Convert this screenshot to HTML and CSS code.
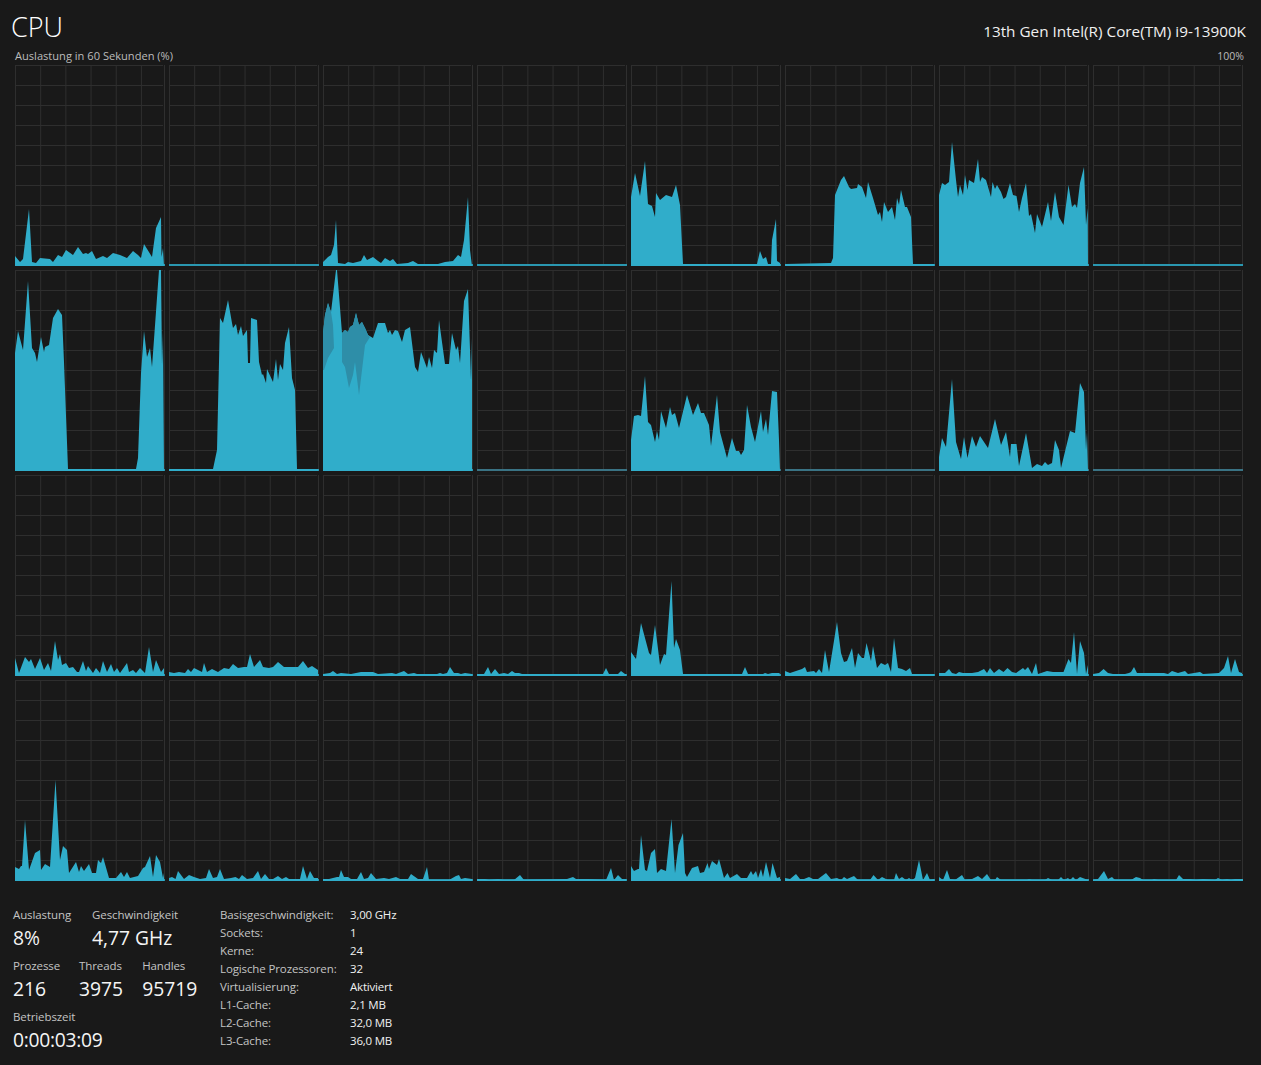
FILE: index.html
```html
<!DOCTYPE html>
<html lang="de">
<head>
<meta charset="utf-8">
<title>CPU</title>
<link rel="stylesheet" href="styles.css">
</head>
<body>
<main class="page">
  <header class="head">
    <h1 class="title">CPU</h1>
    <div class="model">13th Gen Intel(R) Core(TM) i9-13900K</div>
  </header>
  <div class="axis"><span>Auslastung in 60 Sekunden (%)</span><span class="axis-max">100%</span></div>
  <section class="charts">
    <div class="cell"><svg class="plot" viewBox="0 0 150 201"><polygon points="0,191 5,197 8,194 14,144 17,197 21,198 25,193 35,194 38,197 43,190 47,192 51,185 58,190 63,182 68,189 71,188 73,189 77,186 81,194 88,191 92,193 98,188 105,190 112,193 118,186 123,190 126,193 129,179 137,192 141,163 146,152 146.5,192 148,183 149,201 0,201"/></svg></div>
    <div class="cell"></div>
    <div class="cell"><svg class="plot" viewBox="0 0 150 201"><polygon points="0,197 5,192 8,190 11,180 13,155 15,198 22,199 25,197 30,198 38,196 41,190 44,195 50,192 55,196 58,198 62,193 67,196 70,194 74,199 85,198 90,196 95,199 115,199 122,197 130,196 135,190 138,192 141,175 145,132 147,185 149,201 0,201"/></svg></div>
    <div class="cell"></div>
    <div class="cell"><svg class="plot" viewBox="0 0 150 201"><polygon points="0,132 4,108 9,131 14,96 17,139 21,141 24,152 25,128 29,135 35,130 41,132 45,120 49,140 52,199 126,199 129,186 132,194 135,192 137,199 140,199 141,175 145,154 146,196 149,198 149,201 0,201"/></svg></div>
    <div class="cell"><svg class="plot" viewBox="0 0 150 201"><polygon points="0,199 46,198 48,193 50,130 56,115 59,111 64,122 66,124 72,123 73,119 77,122 81,133 83,117 88,133 93,150 95,147 97,157 99,137 103,147 107,142 110,155 112,133 114,140 116,125 120,142 122,142 126,152 128,199 149,199 149,201 0,201"/></svg></div>
    <div class="cell"><svg class="plot" viewBox="0 0 150 201"><polygon points="0,130 3,118 6,120 10,117 13,77 17,115 19,132 21,120 24,130 26,110 28.5,125 30,115 35,118 39,94 41,117 43,112 47,115 52,132 53.5,117 56,124 58,120 62,127 64.5,134 67,132 71,118 74,130 77.5,131 80,147 83,133 87,118 90,151 92,149 96,168 98,149 103,162 109,137 112,156 116,127 120,152 124.5,160 129.5,120 133,142 136,139 138,143 141,118 145,102 147,160 148.7,143 149,201 0,201"/></svg></div>
    <div class="cell"></div>

    <div class="cell"><svg class="plot" viewBox="0 0 150 201"><polygon points="0,83 3,61 8,80 13,11 17,78 20,83 22,92 26,67 29,82 30,77 34,75 38,48 43,39 47,45 49,92 53,199 121,199 123,188 126,103 129,61 132,87 135,78 137,97 144,0 146,0 147,95 148,62 149,201 0,201"/></svg></div>
    <div class="cell"><svg class="plot" viewBox="0 0 150 201"><polygon points="0,199 44,199 48,180 51,48 54,53 59,30 63,53 64,58 67,54 69,65 72,56 74,66 78,60 79,93 81,93 82,48 88,50 90,92 93,105 94,104 97,113 98,99 104,112 107,89 109,110 111,94 114,100 116,73 120,57 123,108 126,120 128,199 149,199 149,201 0,201"/></svg></div>
    <div class="cell"><svg class="plot" viewBox="0 0 150 201"><polygon points="0,63 2,45 5,33 8,42 13,0 14,0 19,63 22,60 25,62 27,57 30,55 33,43 36,55 39,52 42,58 45,65 50,68 55,53 62,53 65,63 67,60 69,65 72,60 75,61 79,72 82,60 87,57 92,97 95,102 98,82 104,98 106,87 109,98 111,80 114,83 116,50 122,94 126,94 129,63 133,80 135,76 137,93 141,31 145,19 148,110 149,68 149,201 0,201"/><polygon class="shade" points="0,63 2,45 5,33 8,42 10,55 11,78 5,88 1,100 0,100"/><polygon class="shade" points="19,63 22,60 25,62 27,57 30,55 33,43 36,55 39,52 42,58 45,65 47,67 42,75 36,125 32,92 30,105 26,118 22,97 19,92"/></svg></div>
    <div class="cell cell-dim"></div>
    <div class="cell cell-dim"><svg class="plot" viewBox="0 0 150 201"><polygon points="0,170 3,146 7,145 10,146 14,106 17,152 20,155 24,172 26,161 28,170 30,141 35,158 39,137 41,145 44,143 48,158 56,125 62,145 67,133 70,143 73,143 78,155 80,176 86,125 89,162 96,188 101,168 105,181 108,181 110,185 113,180 116,135 120,157 124,172 130,141 132,162 135,149 137,165 141,121 146,122 148,170 149,201 0,201"/></svg></div>
    <div class="cell cell-dim"></div>
    <div class="cell cell-dim"><svg class="plot" viewBox="0 0 150 201"><polygon points="0,187 3,168 7,177 13,109 17,172 22,189 25,167 28.5,188 33,166 37,177 41,166 49,178 56,149 62,175 67,162 71,187 72,174 77.5,174 80,196 87,163 93,198 98,194 103,196 106,192 109,195 113,193 116,170 120,180 122,198 131,161 136,163 141,113 145,122 147,180 148,162 149,201 0,201"/></svg></div>
    <div class="cell cell-dim"></div>

    <div class="cell"><svg class="plot" viewBox="0 0 150 201"><polygon points="0,183 4,198 10,182 14,187 16,184 20,194 25,183 29,195 33,188 36,196 40,166 43,185 45,179 47,190 51,188 54,193 58,192 62,197 64,197 68,186 71,196 73,191 78,198 81,193 85,198 88,186 92,197 96,189 99,197 102,193 105,198 112,188 114,197 118,195 121,198 125,193 130,198 134,172 138,197 141,185 146,197 149,193 149,201 0,201"/></svg></div>
    <div class="cell"><svg class="plot" viewBox="0 0 150 201"><polygon points="0,197 5,198 10,197 16,198 19,194 22,197 25,193 29,195 33,197 35,188 38,197 43,194 49,197 55,193 60,194 64,189 69,193 75,192 78,192 81,179 85,192 91,185 94,192 100,193 104,192 109,187 115,192 129,192 134,186 139,193 143,191 149,195 149,201 0,201"/></svg></div>
    <div class="cell"><svg class="plot" viewBox="0 0 150 201"><polygon points="0,199 7,198 10,196 14,199 18,198 28,199 38,197 50,197 55,199 69,198 73,199 81,196 85,199 91,198 94,199 114,199 117,198 120,199 124,198 127,192 131,198 135,198 138,199 142,198 149,199 149,201 0,201"/></svg></div>
    <div class="cell"><svg class="plot" viewBox="0 0 150 201"><polygon points="0,199 7,199 11,192 14,199 18,194 22,199 27,198 31,199 35,196 38,198 42,198 45,199 126,199 129,193 132,199 141,199 144,196 148,199 149,199 149,201 0,201"/></svg></div>
    <div class="cell"><svg class="plot" viewBox="0 0 150 201"><polygon points="0,177 5,184 10,148 18,178 20,180 24,150 29,190 33,179 35,180 40.5,106 43,173 45,164 49,175 52,199 111,199 114,192 117,199 132,199 134,198 137,199 141,198 148.5,198 149,201 0,201"/></svg></div>
    <div class="cell"><svg class="plot" viewBox="0 0 150 201"><polygon points="0,196 5,198 11,196 17,194 20,192 22,197 29,196 31,198 34,194 37,198 40,175 44,197 52,147 56,178 59,187 62,186 67,173 70,193 73,178 77,183 79,183 81.5,168 86,186 88,171 92,193 96,188 100,190 103,188 106,197 109,163 113,193 117,194 121,196 125,193 127,199 149,199 149,201 0,201"/></svg></div>
    <div class="cell"><svg class="plot" viewBox="0 0 150 201"><polygon points="0,198 6,198 10,194 13,198 17,199 20,197 24,198 33,198 39,197 45,194 48,198 51,193 55,198 60,194 64.5,197 68.5,193 73,197 77,198 84,193 86,195 89,192 93,199 97,188 99,199 108,196 114,197 124.5,197 129.5,184 132,188 135,157 138,199 141,166 145,178 147,199 149,190 149,201 0,201"/></svg></div>
    <div class="cell"><svg class="plot" viewBox="0 0 150 201"><polygon points="0,199 6,198 10.6,194 15,198 20,199 32,199 36,198 38,197 41,192 44,198 52,198 63,198 71,198 75,199 79,196 85,198 92,196 95,199 107,197 110,199 126,198 131,193 135,181 138,198 142,184 146,197 149,198 149,201 0,201"/></svg></div>

    <div class="cell"><svg class="plot" viewBox="0 0 150 201"><polygon points="0,187 4,189 6,186 7,186 10,140 14,190 20,173 25,170 26,190 30,184 35,187 40.5,100 45,180 48,166 52,170 54,193 61,182 64,192 66,186 69,191 74,184 77,193 81,193 83,180 86,183 88,177 94,198 101,198 106,192 109,197 112,192 115,198 123,196 128,188 130,187 135,176 138,197 141,175 145,182 148,198 149,193 149,201 0,201"/></svg></div>
    <div class="cell"><svg class="plot" viewBox="0 0 150 201"><polygon points="0,198 3,197 6.5,199 9,191 15,199 20,195 25,197 31,199 37,198 40,189 44,198 48,197 51,189 55,199 62,198 66.5,197 70,199 73,195 78,199 84,198 89,191 92,199 96,194 100,199 104,199 109,196 113,199 117,197 120,199 131,199 134,186 138,199 141,191 145,198 149,198 149,201 0,201"/></svg></div>
    <div class="cell"><svg class="plot" viewBox="0 0 150 201"><polygon points="0,199 6,199 14,197 16,197 18,190 21,197 25,197 28,199 34,199 38,192 41,199 45,198 48,193 53,199 61,198 66,199 73,197 77,199 85,199 88,194 95,199 100,199 104,187 106,200 126,200 133,196 136,195 138,199 142,198 149,199 149,201 0,201"/></svg></div>
    <div class="cell"><svg class="plot" viewBox="0 0 150 201"><polygon points="0,199 8,199 12,200 21,199 27,200 37,200 43,195 47,200 90,199 96,197 99,199 111,199 129,200 134,188 137,200 141,195 145,199 149,199 149,201 0,201"/></svg></div>
    <div class="cell"><svg class="plot" viewBox="0 0 150 201"><polygon points="0,186 3,191 7,189 8,189 10,155 14,190 16,191 20,173 24,169 26,193 30,189 35,191 40.5,139 44,193 47.5,165 52,153 54,193 56,197 61,188 67,186 69,193 73,192 76.5,183 78,189 81,181 86,185 88,179 93,198 96.5,193 99,198 106,194 110,198 116,198 120,191 122,195 125,191 127,198 130,189 132,197 135,182 139,198 141.5,183 146,198 149,197 149,201 0,201"/></svg></div>
    <div class="cell"><svg class="plot" viewBox="0 0 150 201"><polygon points="0,198 5,199 11,194 15,199 19,199 24,197 28,199 33,199 41,193 46,199 52,198 56,200 59,197 62,199 69,196 73,200 85,200 88.5,195 93,200 97,197 103,200 109,200 111,193 114,199 117,197 121,200 124,198 127,200 130,198 134,180 138,200 142,193 145,200 149,199 149,201 0,201"/></svg></div>
    <div class="cell"><svg class="plot" viewBox="0 0 150 201"><polygon points="0,197 4,200 8,190 11,199 16,200 23,195 26,200 33,199 39,196 43,199 48,194 52,200 56,200 58,197 62,200 88,200 90,199 93,200 106,200 109,198 113,200 119,200 122,197 125,200 129,198 131,200 134,197 137,200 141,197 149,200 149,201 0,201"/></svg></div>
    <div class="cell"><svg class="plot" viewBox="0 0 150 201"><polygon points="0,200 5,199 11,191 15,199 19,197 22,200 38,200 43,197 47,198 50,200 59,200 61,199 65,200 83,200 86,195 90,199 97,199 103,200 110,199 122,200 125,198 129,200 134,199 138,200 142,199 150,199 150,201 0,201"/></svg></div>
  </section>
  <section class="stats">
    <div class="live">
      <div class="live-row live-row-wide">
        <div class="stat"><div class="label">Auslastung</div><div class="value">8%</div></div>
        <div class="stat"><div class="label">Geschwindigkeit</div><div class="value">4,77 GHz</div></div>
      </div>
      <div class="live-row">
        <div class="stat"><div class="label">Prozesse</div><div class="value">216</div></div>
        <div class="stat"><div class="label">Threads</div><div class="value">3975</div></div>
        <div class="stat"><div class="label">Handles</div><div class="value">95719</div></div>
      </div>
      <div class="live-row">
        <div class="stat"><div class="label">Betriebszeit</div><div class="value value-time">0:00:03:09</div></div>
      </div>
    </div>
    <dl class="specs">
      <dt>Basisgeschwindigkeit:</dt><dd>3,00 GHz</dd>
      <dt>Sockets:</dt><dd>1</dd>
      <dt>Kerne:</dt><dd>24</dd>
      <dt>Logische Prozessoren:</dt><dd>32</dd>
      <dt>Virtualisierung:</dt><dd>Aktiviert</dd>
      <dt>L1-Cache:</dt><dd>2,1 MB</dd>
      <dt>L2-Cache:</dt><dd>32,0 MB</dd>
      <dt>L3-Cache:</dt><dd>36,0 MB</dd>
    </dl>
  </section>
</main>
</body>
</html>
```
FILE: styles.css
```css
* { box-sizing: border-box; }
html, body { margin: 0; background: #191919; }
body { font-family: "Open Sans", "Noto Sans", sans-serif; color: #fff; }
.page { width: 1261px; height: 1065px; overflow: hidden; }
.head { display: flex; justify-content: space-between; align-items: flex-start; height: 47px; padding: 9px 15px 0 11px; }
.title { margin: 0; font-size: 27px; line-height: 36px; font-weight: 300; color: #fff; }
.model { margin-top: 12px; font-size: 15.3px; line-height: 20px; color: #f0f0f0; }
.axis { display: flex; justify-content: space-between; height: 18px; padding: 2px 17px 0 15px; font-size: 11.1px; line-height: 14px; color: #bcbcbc; }
.axis-max { font-size: 10.5px; }
.charts { display: grid; grid-template-columns: repeat(8, 150px); grid-auto-rows: 201px; gap: 4px; padding-left: 15px; }
.cell {
  --base: #2a97b0;
  position: relative;
  background-color: #191919;
  background-image:
    linear-gradient(var(--base), var(--base)),
    linear-gradient(#2f2f2f, #2f2f2f),
    linear-gradient(to right, #2e2e2e 1px, transparent 1px),
    linear-gradient(to bottom, #2e2e2e 1px, transparent 1px);
  background-size: 100% 2px, 1px 100%, 25.2px 100%, 148px 20px;
  background-position: left bottom, right top, left top, left top;
  background-repeat: no-repeat, no-repeat, repeat-x, repeat-y;
}
.cell-dim { --base: #3a7384; }
.plot { display: block; width: 150px; height: 201px; filter: blur(0.35px); }
.plot polygon { fill: #30adca; }
.plot polygon.shade { fill: #2e8ea8; }
.stats { display: flex; padding: 25px 0 0 13px; }
.live { width: 207px; display: flex; flex-direction: column; gap: 1px; }
.live-row { display: flex; gap: 19px; height: 50px; }
.live-row-wide { gap: 21px; }
.label { font-size: 11.5px; line-height: 18px; color: #c4c4c4; white-space: nowrap; letter-spacing: -0.1px; }
.value { font-size: 19.3px; line-height: 28px; color: #f4f4f4; white-space: nowrap; }
.value-time { letter-spacing: -0.3px; }
.specs { margin: 0; display: grid; grid-template-columns: 130px auto; grid-auto-rows: 18px; font-size: 11.5px; line-height: 18px; }
.specs dt { color: #c4c4c4; white-space: nowrap; letter-spacing: -0.12px; }
.specs dd { margin: 0; color: #f0f0f0; white-space: nowrap; letter-spacing: -0.2px; }
```
